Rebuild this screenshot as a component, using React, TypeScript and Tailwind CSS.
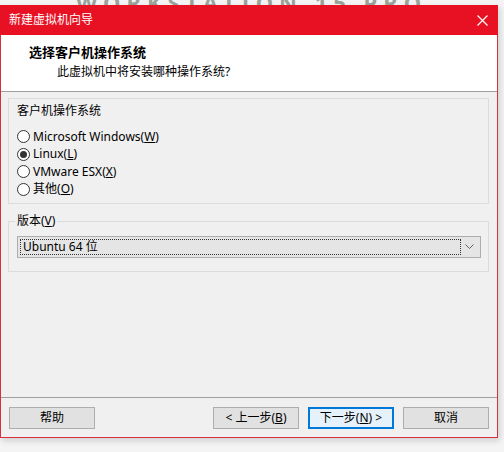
import React from "react";

const font = { fontFamily: '"Noto Sans", "Noto Sans CJK SC", sans-serif' };

function Radio({ checked, label, u, rest }: { checked?: boolean; label: string; u: string; rest?: string }) {
  return (
    <div className="flex items-center h-[17.5px]">
      <span className="w-[13px] h-[13px] rounded-full border border-[#333333] bg-white flex items-center justify-center">
        {checked && <span className="w-[7px] h-[7px] rounded-full bg-[#333333]" />}
      </span>
      <span className="ml-[3px] text-[12px] text-black leading-none">
        {label}(<span className="underline">{u}</span>){rest}
      </span>
    </div>
  );
}

function Btn({ children, primary }: { children: React.ReactNode; primary?: boolean }) {
  return (
    <div
      className={
        "w-[86px] h-[22px] flex items-center justify-center text-[12px] text-black " +
        (primary ? "border-2 border-[#0078d7] bg-[#e5f1fb]" : "border border-[#adadad] bg-[#e1e1e1]")
      }
    >
      {children}
    </div>
  );
}

export default function App() {
  return (
    <div className="w-[504px] h-[452px] bg-[#f4f4f4] relative overflow-hidden" style={font}>
      <div className="absolute left-[76px] top-[-14px] text-[22px] font-bold tracking-[6px] text-[#9aa39a] whitespace-nowrap">
        WORKSTATION 15 PRO
      </div>
      <div className="relative mt-[5px] w-[498px] h-[433px] border border-[#d9303f] bg-[#f0f0f0] flex flex-col shadow-[2px_3px_6px_rgba(0,0,0,0.15)]">
        <div className="h-[30px] -mt-px -mx-px bg-[#e81123] flex items-center justify-between pl-[9px] pr-[10px]">
          <span className="text-white text-[12px]">新建虚拟机向导</span>
          <svg width="11" height="11" viewBox="0 0 11 11">
            <path d="M0.5 0.5L10.5 10.5M10.5 0.5L0.5 10.5" stroke="white" strokeWidth="1.2" />
          </svg>
        </div>
        <div className="h-[57px] bg-white border-b border-[#a0a0a0] flex flex-col pt-[8px]">
          <div className="pl-[28px] text-[13px] font-bold text-black leading-[18px]">选择客户机操作系统</div>
          <div className="pl-[56px] text-[12px] text-black leading-[18px] mt-[2px]">此虚拟机中将安装哪种操作系统?</div>
        </div>
        <div className="flex-1 flex flex-col px-[7px] pt-[6px]">
          <div className="w-[481px] h-[106px] border border-[#dcdcdc] pl-[8px] pt-[4px]">
            <div className="text-[12px] text-black leading-[16px]">客户机操作系统</div>
            <div className="mt-[9px] flex flex-col">
              <Radio label="Microsoft Windows" u="W" />
              <Radio checked label="Linux" u="L" />
              <Radio label="VMware ESX" u="X" />
              <Radio label="其他" u="O" />
            </div>
          </div>
          <div className="relative mt-[17px] w-[481px] h-[51px] border border-[#dcdcdc]">
            <div className="absolute left-[6px] top-[-9px] px-[2px] bg-[#f0f0f0] text-[12px] text-black leading-[16px]">
              版本(<span className="underline">V</span>)
            </div>
            <div className="ml-[8px] mt-[14px] w-[464px] h-[22px] border border-[#adadad] bg-[#e5e5e5] flex items-center p-[2px]">
              <div className="flex-1 h-full border border-dotted border-[#333333] flex items-center pl-[2px] text-[12px] text-black">
                Ubuntu 64 位
              </div>
              <div className="w-[17px] flex items-center justify-center">
                <svg width="9" height="6" viewBox="0 0 9 6">
                  <path d="M0.5 0.5L4.5 4.5L8.5 0.5" stroke="#606060" strokeWidth="1" fill="none" />
                </svg>
              </div>
            </div>
          </div>
          <div className="flex-1" />
        </div>
        <div className="h-[40px] border-t border-[#a0a0a0] flex items-start pt-[9px] px-[8px]">
          <Btn>帮助</Btn>
          <div className="flex-1" />
          <div className="flex gap-[9px]">
            <Btn>
              &lt; 上一步(<span className="underline">B</span>)
            </Btn>
            <Btn primary>
              下一步(<span className="underline">N</span>) &gt;
            </Btn>
            <Btn>取消</Btn>
          </div>
        </div>
      </div>
    </div>
  );
}
